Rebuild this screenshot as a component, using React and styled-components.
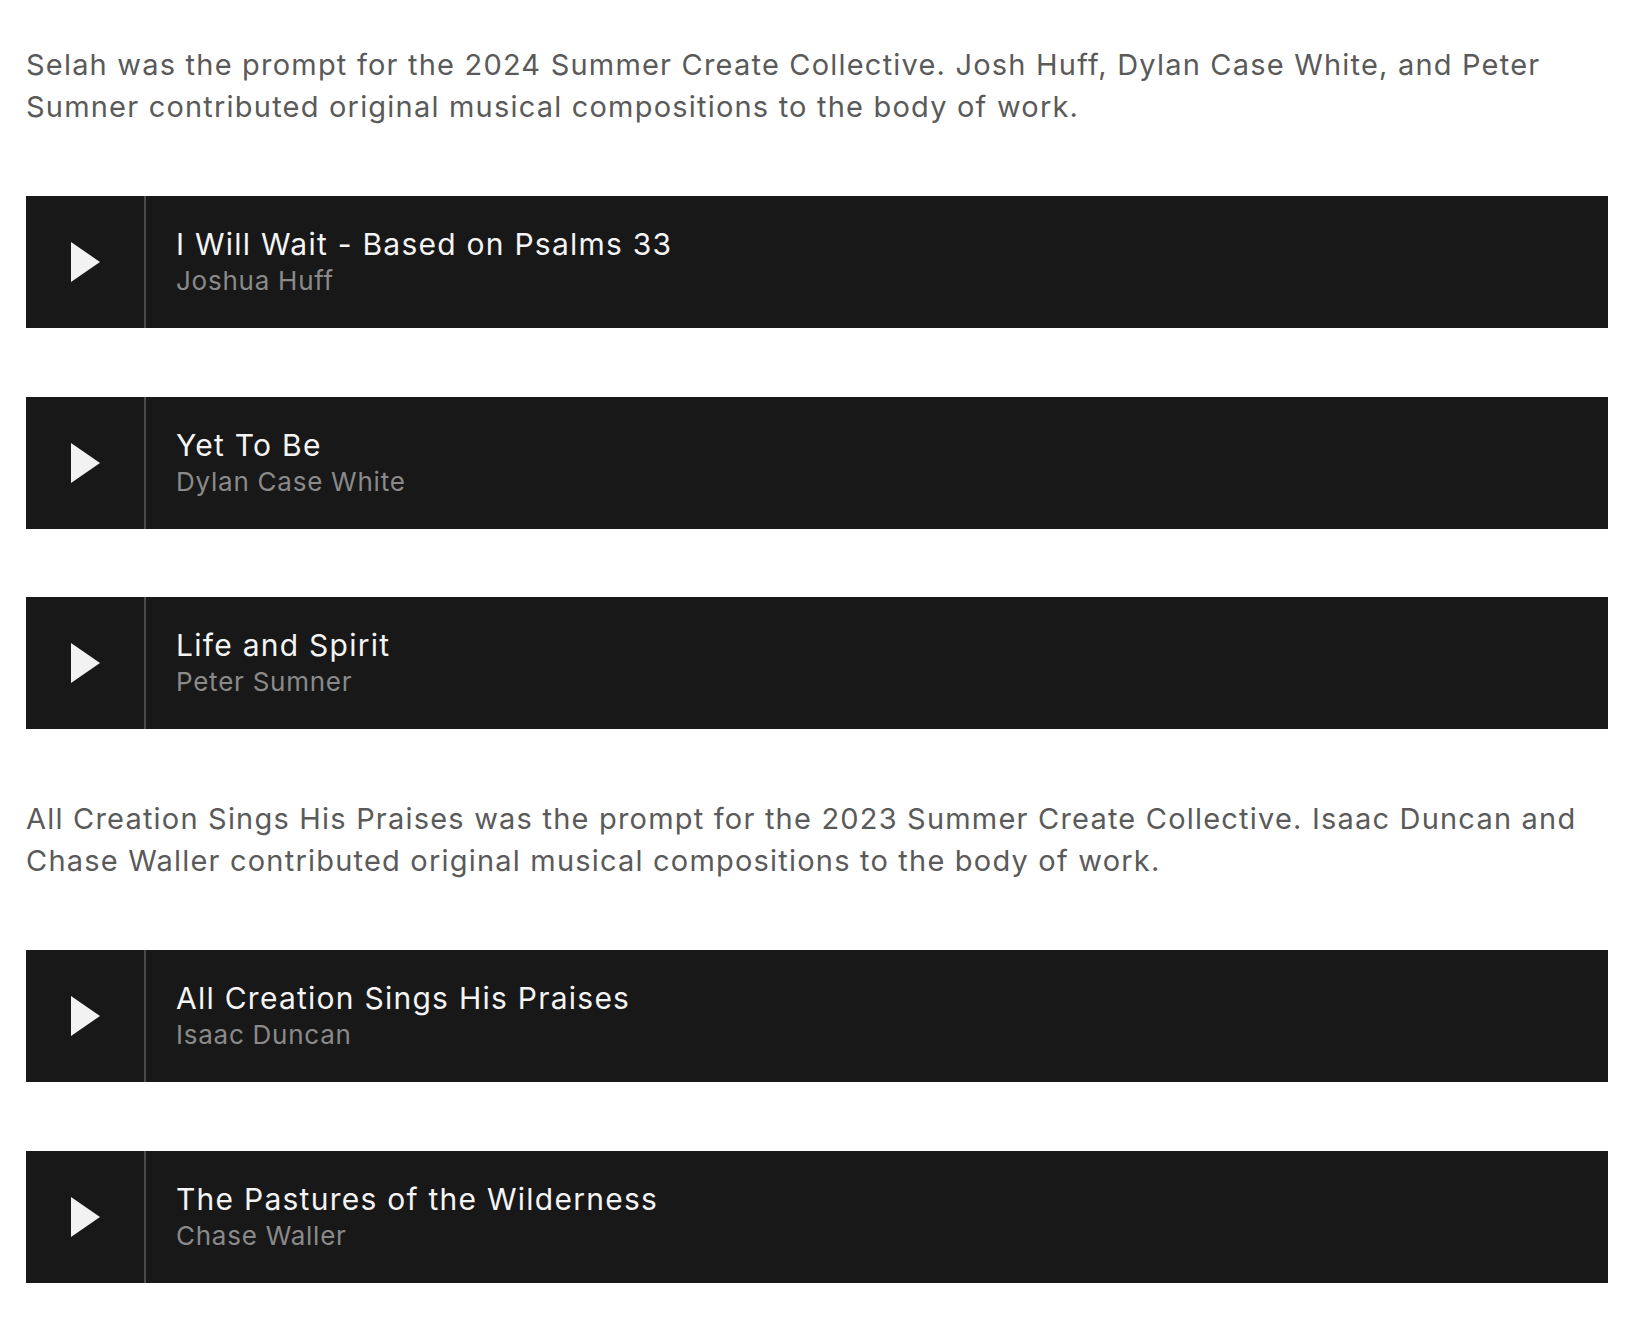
import React from "react";
import styled, { createGlobalStyle } from "styled-components";

const Global = createGlobalStyle`
  html, body { margin: 0; padding: 0; background: #ffffff; }
  body { font-family: Inter, "Open Sans", "Liberation Sans", sans-serif; -webkit-font-smoothing: antialiased; }
  * { box-sizing: border-box; }
`;

const Page = styled.main`
  display: flex;
  flex-direction: column;
  gap: 68.5px;
  padding: 43.5px 24px 40px 26px;
`;

const Intro = styled.p`
  margin: 0;
  font-size: 29px;
  line-height: 42px;
  letter-spacing: 1.2px;
  color: #5a5a5a;
`;

const Track = styled.div`
  display: flex;
  height: 132px;
  background: #181818;
`;

const PlayCell = styled.button`
  flex: 0 0 120px;
  display: flex;
  align-items: center;
  justify-content: center;
  background: transparent;
  border: 0;
  border-right: 2px solid #4a4a4a;
  padding: 0 0 0 2px;
  cursor: pointer;
`;

const Info = styled.div`
  display: flex;
  flex-direction: column;
  padding: 29px 0 0 30px;
`;

const Title = styled.div`
  font-size: 30px;
  line-height: 38px;
  letter-spacing: 1.25px;
  color: #f4f4f4;
`;

const Artist = styled.div`
  margin-top: 2px;
  font-size: 26px;
  line-height: 32px;
  letter-spacing: 0.75px;
  color: #8a8a8a;
`;

const PlayIcon = () => (
  <svg width="30" height="40" viewBox="0 0 30 40" aria-hidden="true">
    <polygon points="0,0 29,20 0,40" fill="#f2f2f2" />
  </svg>
);

const TrackRow = ({ title, artist }) => (
  <Track>
    <PlayCell aria-label={`Play ${title}`}>
      <PlayIcon />
    </PlayCell>
    <Info>
      <Title>{title}</Title>
      <Artist>{artist}</Artist>
    </Info>
  </Track>
);

export default function App() {
  return (
    <>
      <Global />
      <Page>
        <Intro>
          Selah was the prompt for the 2024 Summer Create Collective. Josh Huff, Dylan Case White, and Peter Sumner contributed original musical compositions to the body of work.
        </Intro>
        <TrackRow title="I Will Wait - Based on Psalms 33" artist="Joshua Huff" />
        <TrackRow title="Yet To Be" artist="Dylan Case White" />
        <TrackRow title="Life and Spirit" artist="Peter Sumner" />
        <Intro>
          All Creation Sings His Praises was the prompt for the 2023 Summer Create Collective. Isaac Duncan and Chase Waller contributed original musical compositions to the body of work.
        </Intro>
        <TrackRow title="All Creation Sings His Praises" artist="Isaac Duncan" />
        <TrackRow title="The Pastures of the Wilderness" artist="Chase Waller" />
      </Page>
    </>
  );
}
